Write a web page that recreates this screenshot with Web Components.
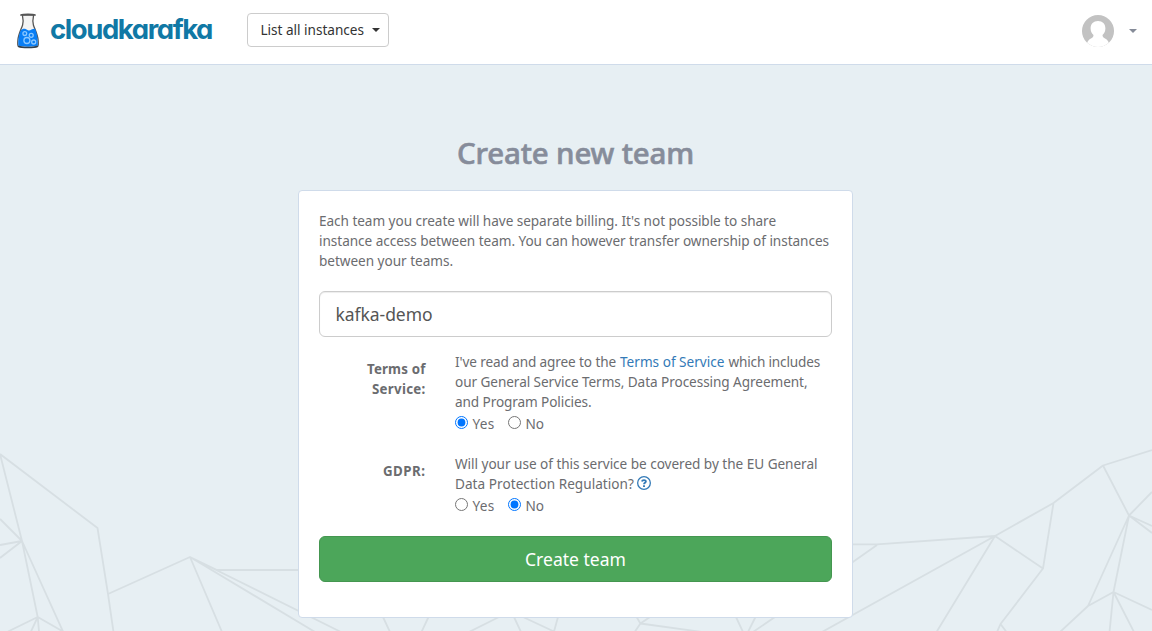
<!DOCTYPE html>
<html lang="en">
<head>
<meta charset="utf-8">
<title>CloudKarafka</title>
<style>
  html, body { margin: 0; height: 100%; }
  body { font: 13.6px/20px "Noto Sans", "Open Sans", sans-serif; color: #6b6c6f; background: #e7eff3; overflow: hidden; }
</style>
</head>
<body>
<team-page></team-page>
<script>
// One line of text, tracked so that it fills the given width.
class FitText extends HTMLElement {
  connectedCallback() {
    if (this.shadowRoot) return;
    this.attachShadow({ mode: "open" }).innerHTML = `
      <style>:host{display:inline-block;white-space:nowrap;vertical-align:baseline} span{display:inline-block}</style>
      <span><slot></slot></span>`;
    const span = this.shadowRoot.querySelector("span");
    const width = Number(this.getAttribute("width"));
    const count = this.textContent.length;
    span.style.letterSpacing = "0px";
    const natural = span.getBoundingClientRect().width;
    span.style.letterSpacing = ((width - natural) / count).toFixed(4) + "px";
  }
}

class BrandLogo extends HTMLElement {
  constructor() {
    super();
    this.attachShadow({ mode: "open" }).innerHTML = `
      <style>
        :host{display:flex;align-items:flex-start;width:198px;height:64px}
        svg{flex:none;margin:13px 10px 0 0}
        fit-text{font:700 27.500px/32px Inter,Lato,sans-serif;font-feature-settings:"cv11" 1;color:#1078a5;margin-top:13px}
      </style>
      <svg width="24" height="36" viewBox="0 0 24 36">
        <path d="M6.4 2.2C7 5 7.500 9 6.600 12C5.500 15.500 2.500 21 1.900 27C1.600 30 1.500 32 2.200 33.200C4 34.800 20 34.800 21.800 33.200C22.500 32 22.400 30 22.100 27C21.500 21 18.500 15.500 17.400 12C16.500 9 17 5 17.600 2.200Z" fill="#f4f4f4" stroke="#555" stroke-width="1.3"/>
        <path d="M4.600 17.500C7 14.800 9.500 15.500 12 17.200C14 18.300 16 15.500 19 15.800C20.800 20 22 25 21.800 32.500C19 34 5 34 2.300 32.500C2 26 3 21 4.600 17.500Z" fill="#087ef5"/>
        <path d="M5 2C7 1.100 17 1.100 19 2" fill="none" stroke="#555" stroke-width="1.700" stroke-linecap="round"/>
        <path d="M2.200 33.200C6 35 18 35 21.800 33.200" fill="none" stroke="#30404f" stroke-width="1.600"/>
        <g fill="none" stroke="#8cc8ff" stroke-width="1.300"><circle cx="8.800" cy="20.600" r="1.900"/><circle cx="15.200" cy="22.300" r="2"/><circle cx="10.900" cy="27.500" r="3"/><circle cx="17.700" cy="29" r="2"/></g>
      </svg>
      <fit-text width="162">cloudkarafka</fit-text>`;
  }
}

class InstanceMenu extends HTMLElement {
  constructor() {
    super();
    this.attachShadow({ mode: "open" }).innerHTML = `
      <style>
        :host{display:block;margin:13px auto 0 33px}
        button{box-sizing:border-box;width:142px;height:34px;display:flex;align-items:center;padding:0 8px 0 12.500px;border:1px solid #ccc;border-radius:4px;background:#fff;font:inherit;color:#333}
        i{margin-left:auto;border:4px solid transparent;border-top-color:#333;border-bottom:0}
      </style>
      <button><fit-text width="103.5"><slot></slot></fit-text><i></i></button>`;
  }
  connectedCallback() {
    const fit = this.shadowRoot.querySelector("fit-text");
    if (fit.shadowRoot) {
      const span = fit.shadowRoot.querySelector("span");
      span.style.letterSpacing = "0px";
      const natural = span.getBoundingClientRect().width;
      span.style.letterSpacing = (103.5 - natural) / this.textContent.length + "px";
    }
  }
}

class UserMenu extends HTMLElement {
  constructor() {
    super();
    this.attachShadow({ mode: "open" }).innerHTML = `
      <style>
        :host{display:flex;align-items:center;height:62px;margin-right:15px}
        i{margin-left:15px;border:4px solid transparent;border-top-color:#858b98;border-bottom:0}
      </style>
      <svg width="32" height="32" viewBox="0 0 32 32">
        <defs><clipPath id="round"><circle cx="16" cy="16" r="16"/></clipPath></defs>
        <g clip-path="url(#round)"><rect width="32" height="32" fill="#c2c2c2"/>
        <path d="M16 6C11.500 6 8.600 9 8.600 13.200C8.600 16.300 9.800 18.500 11.500 19.900C11.500 21.600 10.500 22.600 8.500 23.800C6 25.200 5 27 4.400 32H27.600C27 27 26 25.200 23.500 23.800C21.500 22.600 20.500 21.600 20.500 19.900C22.200 18.500 23.400 16.300 23.400 13.200C23.400 9 20.500 6 16 6Z" fill="#fff"/></g>
      </svg><i></i>`;
  }
}

class SiteHeader extends HTMLElement {
  constructor() {
    super();
    this.attachShadow({ mode: "open" }).innerHTML = `
      <style>:host{display:flex;box-sizing:border-box;height:65px;padding-left:16px;background:#fff;border-bottom:1px solid #cfdbea}</style>
      <brand-logo></brand-logo><instance-menu>List all instances</instance-menu><user-menu></user-menu>`;
  }
}

class MeshBackdrop extends HTMLElement {
  constructor() {
    super();
    this.attachShadow({ mode: "open" }).innerHTML = `
      <style>:host{position:absolute;left:0;bottom:0;width:1152px;height:191px;z-index:0} svg{display:block}</style>
      <svg width="1152" height="191" viewBox="0 440 1152 191" fill="none" stroke="#d7dfe3" stroke-width="1.800" stroke-linejoin="round">
        <path d="M0 454L97.500 528L108 594L113.500 632M0 454L22 541M0 519L22 541L0 545M0 558L22 541L37.700 617L8 631.500M22 541L63 631.500L37.700 617L31 631.500M37.700 617L39 631.500"/>
        <path d="M108 594L190 557L222 632M190 557L217 570H310M190 557L340 631.500M190 557L315 632"/>
        <path d="M383 617L390 632M428.500 617L421.500 632M499 617L469 632M514 617L521 632M523 617L554 631.500L558 617M636 616L640.400 623.500L650 617M632 636L640.400 623.500L702 632M736 617L743 632M755.500 617L748 632M775 617L753 632"/>
        <path d="M850 544.300H877L995 536L1053.500 503L1103 465.500L1152 450M850 564L877 545M995 536L822 632M995 536L936.500 632M995 536L1043 568.500L1053.500 503M1043 568.500L1000.500 624L997 632M1000.500 624L1006.500 632"/>
        <path d="M1103 465.500L1129 515.500L1152 492M1152 526L1129 515.500L1152 533M1129 515.500L1088 606L1060 632M1129 515.500L1113.500 592L1088 606M1109.500 632L1113.500 592L1134 632M1113.500 592L1152 610"/>
      </svg>`;
  }
}

class ConsentRow extends HTMLElement {
  constructor() {
    super();
    const on = this.getAttribute("value");
    this.attachShadow({ mode: "open" }).innerHTML = `
      <style>
        :host{display:grid;grid-template-columns:106.500px 1fr;column-gap:29.500px;margin-bottom:20px}
        .label{padding-top:7px;text-align:right;font-weight:700;font-size:13.300px}
        .radios{display:flex;height:20px;margin-top:2px}
        label{display:flex;width:53px}
        input{width:13px;height:13px;margin:2px 4.500px 0 0;flex:none}
      </style>
      <div class="label"><slot name="label"></slot></div>
      <div><slot></slot>
        <div class="radios">
          <label><input type="radio" name="c" ${on === "yes" ? "checked" : ""}><fit-text width="22">Yes</fit-text></label>
          <label><input type="radio" name="c" ${on === "no" ? "checked" : ""}><fit-text width="18.5">No</fit-text></label>
        </div>
      </div>`;
  }
}

class HelpIcon extends HTMLElement {
  constructor() {
    super();
    this.attachShadow({ mode: "open" }).innerHTML = `
      <style>:host{display:inline-block;width:14px;height:14px;margin-left:2.500px;vertical-align:-1px} svg{display:block}</style>
      <svg width="14" height="14" viewBox="0 0 14 14" fill="none" stroke="#337ab7"><circle cx="7" cy="7" r="6.350" stroke-width="1.300"/><path d="M4.900 5.500C5.200 3.600 8.900 3.500 8.900 5.500C8.900 6.800 7 6.800 7 8.300" stroke-width="1.800"/><path d="M7 9.200V11" stroke-width="1.900"/></svg>`;
  }
}

class TeamCard extends HTMLElement {
  constructor() {
    super();
    this.attachShadow({ mode: "open" }).innerHTML = `
      <style>
        :host{display:block;box-sizing:border-box;width:555px;height:428px;padding:20px;background:#fff;border:1px solid #cfdbea;border-radius:4px}
        .line{display:block;height:20px}
        a{color:#337ab7;text-decoration:none}
        .name{box-sizing:border-box;height:46px;margin:20px 0 15px;padding:0 15.500px;display:flex;align-items:center;border:1px solid #ccc;border-radius:6px;box-shadow:inset 0 1px 1px rgba(0,0,0,.075);font-size:17.500px;color:#555}
        .parts{display:flex;gap:4px}
        button{display:block;box-sizing:border-box;width:100%;height:46px;padding:0;border:1px solid #449650;border-radius:6px;background:#4ca65a;color:#fff;font:inherit;font-size:17.500px}
      </style>
      <div>
        <fit-text class="line" width="457">Each team you create will have separate billing. It's not possible to share</fit-text>
        <fit-text class="line" width="510">instance access between team. You can however transfer ownership of instances</fit-text>
        <fit-text class="line" width="134">between your teams.</fit-text>
      </div>
      <div class="name"><fit-text width="97">kafka-demo</fit-text></div>
      <consent-row value="yes">
        <div slot="label"><fit-text class="line" width="58.5">Terms of</fit-text><fit-text class="line" width="53.5">Service:</fit-text></div>
        <div class="line parts"><fit-text width="161">I've read and agree to the</fit-text><a><fit-text width="104.5">Terms of Service</fit-text></a><fit-text width="91.5">which includes</fit-text></div>
        <fit-text class="line" width="352.5">our General Service Terms, Data Processing Agreement,</fit-text>
        <fit-text class="line" width="136.5">and Program Policies.</fit-text>
      </consent-row>
      <consent-row value="no">
        <div slot="label"><fit-text class="line" width="42.5">GDPR:</fit-text></div>
        <fit-text class="line" width="362.5">Will your use of this service be covered by the EU General</fit-text>
        <div class="line"><fit-text width="179">Data Protection Regulation?</fit-text><help-icon></help-icon></div>
      </consent-row>
      <button><fit-text width="101">Create team</fit-text></button>`;
  }
}

class TeamPage extends HTMLElement {
  constructor() {
    super();
    this.attachShadow({ mode: "open" }).innerHTML = `
      <style>
        :host{display:block;position:relative;height:631px;overflow:hidden}
        main{position:relative;z-index:1;display:flex;flex-direction:column;align-items:center;padding-right:1px}
        h1{margin:71px 0 21px;font:500 29.500px/33px "Noto Sans","Open Sans",sans-serif;color:#868c9a;-webkit-text-stroke:.6px #868c9a}
      </style>
      <site-header></site-header>
      <mesh-backdrop></mesh-backdrop>
      <main><h1><fit-text width="237">Create new team</fit-text></h1><team-card></team-card></main>`;
  }
}

customElements.define("fit-text", FitText);
customElements.define("brand-logo", BrandLogo);
customElements.define("instance-menu", InstanceMenu);
customElements.define("user-menu", UserMenu);
customElements.define("site-header", SiteHeader);
customElements.define("mesh-backdrop", MeshBackdrop);
customElements.define("consent-row", ConsentRow);
customElements.define("help-icon", HelpIcon);
customElements.define("team-card", TeamCard);
customElements.define("team-page", TeamPage);
</script>
</body>
</html>
